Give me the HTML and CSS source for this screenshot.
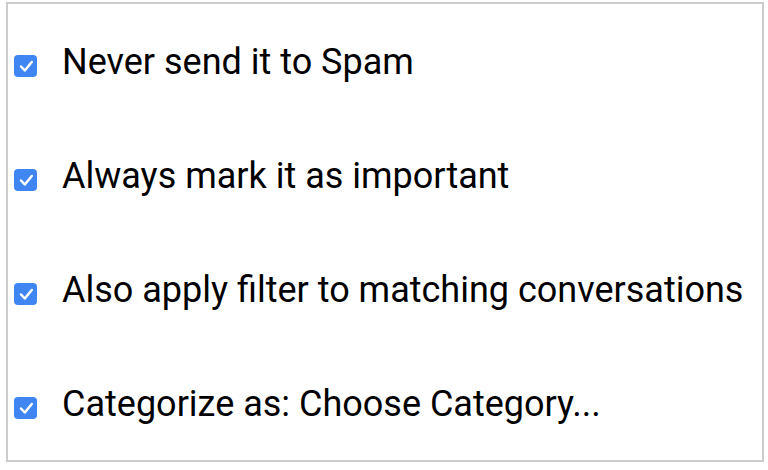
FILE: index.html
```html
<!DOCTYPE html>
<html lang="en">
<head>
    <meta charset="UTF-8">
    <title>Filter options</title>
    <link rel="stylesheet" href="styles.css">
</head>
<body>
    <div class="panel">
        <label class="option">
            <span class="box"><svg viewBox="0 0 22 22" width="22" height="22"><path d="M6 11.5l3.8 4 7-8.5" /></svg></span>
            <span class="text">Never send it to Spam</span>
        </label>
        <label class="option">
            <span class="box"><svg viewBox="0 0 22 22" width="22" height="22"><path d="M6 11.5l3.8 4 7-8.5" /></svg></span>
            <span class="text">Always mark it as important</span>
        </label>
        <label class="option">
            <span class="box"><svg viewBox="0 0 22 22" width="22" height="22"><path d="M6 11.5l3.8 4 7-8.5" /></svg></span>
            <span class="text">Also apply filter to matching conversations</span>
        </label>
        <label class="option">
            <span class="box"><svg viewBox="0 0 22 22" width="22" height="22"><path d="M6 11.5l3.8 4 7-8.5" /></svg></span>
            <span class="text">Categorize as: Choose Category...</span>
        </label>
    </div>
</body>
</html>
```

FILE: styles.css
```css
body {
    margin: 0;
    font-family: Roboto, 'Liberation Sans', sans-serif;
    background: #fff;
    color: #000;
}
.panel {
    margin: 2px 0 0 6px;
    width: 758px;
    height: 460px;
    box-sizing: border-box;
    border: 2px solid #cccccc;
    padding: 1px 0 0 6px;
}
.option {
    display: flex;
    align-items: center;
    height: 114px;
    gap: 25px;
}
.box {
    width: 23px;
    height: 22px;
    border-radius: 4px;
    background: #3f86f3;
    display: flex;
    align-items: center;
    justify-content: center;
    margin-top: 8px;
}
.box svg {
    fill: none;
    stroke: #fff;
    stroke-width: 2.5;
    stroke-linecap: round;
    stroke-linejoin: round;
}
.text {
    font-size: 36px;
    line-height: 40px;
}
```
